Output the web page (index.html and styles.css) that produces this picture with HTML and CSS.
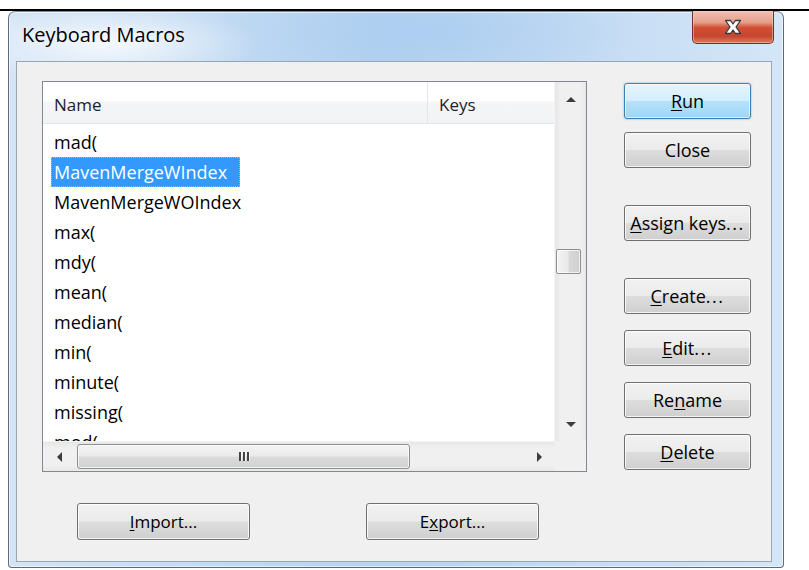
FILE: index.html
```html
<!DOCTYPE html>
<html>
<head>
<meta charset="utf-8">
<title>Keyboard Macros</title>
<link rel="stylesheet" href="styles.css">
</head>
<body>
<div class="rule"></div>
<div class="window">
  <div class="titlebar">
    <span class="title">Keyboard Macros</span>
    <div class="close-x">
      <svg width="20" height="16" viewBox="0 0 20 16">
        <path d="M2.5 1.5 L7.6 1.5 L10 5 L12.4 1.5 L17.5 1.5 L13 8 L17.5 14.5 L12.4 14.5 L10 11 L7.6 14.5 L2.5 14.5 L7 8 Z" fill="#fff" stroke="#3a3a3a" stroke-width="1.3" stroke-linejoin="round"/>
      </svg>
    </div>
  </div>
  <div class="client">
    <div class="main">
      <div class="listbox">
        <div class="list-area">
          <div class="list-view">
            <div class="header">
              <div class="col col-name">Name</div>
              <div class="col col-keys">Keys</div>
            </div>
            <div class="rows">
              <div class="row"><span class="cell">mad(</span></div>
              <div class="row"><span class="cell selected">MavenMergeWIndex</span></div>
              <div class="row"><span class="cell">MavenMergeWOIndex</span></div>
              <div class="row"><span class="cell">max(</span></div>
              <div class="row"><span class="cell">mdy(</span></div>
              <div class="row"><span class="cell">mean(</span></div>
              <div class="row"><span class="cell">median(</span></div>
              <div class="row"><span class="cell">min(</span></div>
              <div class="row"><span class="cell">minute(</span></div>
              <div class="row"><span class="cell">missing(</span></div>
              <div class="row"><span class="cell">mod(</span></div>
            </div>
          </div>
          <div class="vscroll">
            <div class="arrow-box"><span class="tri tri-up"></span></div>
            <div class="vtrack"><div class="vthumb"></div></div>
            <div class="arrow-box"><span class="tri tri-down"></span></div>
          </div>
        </div>
        <div class="hscroll-row">
          <div class="hscroll">
            <div class="harrow-box"><span class="tri tri-left"></span></div>
            <div class="htrack">
              <div class="hthumb"><span class="grip"></span><span class="grip"></span><span class="grip"></span></div>
            </div>
            <div class="harrow-box"><span class="tri tri-right"></span></div>
          </div>
          <div class="corner"></div>
        </div>
      </div>
      <div class="side">
        <div class="group group-top">
          <div class="btn btn-default"><span><u>R</u>un</span></div>
          <div class="btn"><span>Close</span></div>
        </div>
        <div class="group group-mid">
          <div class="btn"><span><u>A</u>ssign keys<span class="dots">...</span></span></div>
        </div>
        <div class="group group-low">
          <div class="btn"><span><u>C</u>reate<span class="dots">...</span></span></div>
          <div class="btn"><span><u>E</u>dit<span class="dots">...</span></span></div>
          <div class="btn"><span>Re<u>n</u>ame</span></div>
          <div class="btn"><span><u>D</u>elete</span></div>
        </div>
      </div>
    </div>
    <div class="bottom">
      <div class="btn btn-wide"><span><u>I</u>mport...</span></div>
      <div class="btn btn-wide"><span>E<u>x</u>port...</span></div>
    </div>
  </div>
</div>
</body>
</html>
```

FILE: styles.css
```css
html, body {
  margin: 0;
  padding: 0;
  background: #ffffff;
}

body {
  width: 809px;
  height: 570px;
  overflow: hidden;
  font-family: "Open Sans", "Noto Sans", "Liberation Sans", sans-serif;
  color: #000;
}

.rule {
  margin-top: 9px;
  height: 2px;
  background: #000;
}

/* Aero-style dialog frame */
.window {
  margin-left: 8px;
  width: 776px;
  height: 557px;
  box-sizing: border-box;
  border: 1px solid #5c6b7c;
  border-top-color: #7d8a98;
  border-radius: 7px 7px 4px 4px;
  padding: 0 11px 5px 7px;
  display: flex;
  flex-direction: column;
  background:
    radial-gradient(ellipse 150px 42px at 100px 32px, rgba(255,255,255,0.8), rgba(255,255,255,0) 100%),
    radial-gradient(ellipse 220px 60px at 420px 20px, rgba(160,200,240,0.5), rgba(160,200,240,0) 100%),
    linear-gradient(90deg, #d3e4f6 0%, #c3dbf3 25%, #b6d3f0 48%, #c1d9f2 68%, #d4e6f8 100%);
  box-shadow: inset 0 0 0 1px rgba(255,255,255,0.55);
}

.titlebar {
  height: 49px;
  display: flex;
  align-items: flex-start;
  justify-content: space-between;
}

.title {
  margin-top: 10px;
  margin-left: 6px;
  font-size: 20px;
  line-height: 26px;
  color: #000;
  text-shadow: 0 0 6px rgba(255,255,255,0.9);
}

.close-x {
  margin-top: -1px;
  margin-right: -2px;
  width: 82px;
  height: 33px;
  box-sizing: border-box;
  border: 1px solid #6e3226;
  border-top: none;
  border-radius: 0 0 5px 5px;
  background: linear-gradient(180deg, #efc0b2 0%, #e6a08c 35%, #d24f35 52%, #c5462e 78%, #dc7a5e 100%);
  box-shadow: inset 0 0 0 1px rgba(255,215,205,0.45);
  display: flex;
  align-items: center;
  justify-content: center;
}

.close-x svg {
  display: block;
}

/* client area */
.client {
  flex: 1;
  background: #f0f0f0;
  border: 1px solid #98a6b4;
  padding: 19px 0 0 25px;
  display: flex;
  flex-direction: column;
}

.main {
  display: flex;
  align-items: flex-start;
}

.listbox {
  width: 545px;
  height: 391px;
  box-sizing: border-box;
  border: 1px solid #828790;
  background: #fff;
  display: flex;
  flex-direction: column;
}

.list-area {
  height: 359px;
  display: flex;
}

.list-view {
  flex: 1;
  overflow: hidden;
  background: #fff;
}

.header {
  height: 42px;
  box-sizing: border-box;
  display: flex;
  border-bottom: 1px solid #e3e5e8;
  background: linear-gradient(180deg, #ffffff 0%, #ffffff 45%, #f4f5f7 50%, #f2f3f5 100%);
}

.col {
  font-size: 17px;
  line-height: 46px;
  color: #1e1e28;
  box-sizing: border-box;
}

.col-name {
  width: 385px;
  padding-left: 11px;
  border-right: 1px solid #e3e5e8;
}

.col-keys {
  padding-left: 11px;
}

.rows {
  padding-top: 3px;
}

.row {
  height: 30px;
  display: flex;
  align-items: center;
  padding-left: 8px;
}

.cell {
  font-size: 18px;
  line-height: 28px;
  padding: 0 12px 0 2px;
  color: #000;
  border: 1px dotted transparent;
}

.cell.selected {
  background: #3399ff;
  color: #fff;
  border: 1px dotted #f2a64f;
}

/* vertical scrollbar */
.vscroll {
  width: 31px;
  display: flex;
  flex-direction: column;
  background: linear-gradient(90deg, #e6e6e6 0%, #f0f0f0 20%, #f0f0f0 80%, #e8e8e8 100%);
  border-left: 1px solid #f4f4f4;
}

.arrow-box {
  height: 34px;
  display: flex;
  align-items: center;
  justify-content: center;
}

.vtrack {
  flex: 1;
  padding-left: 1px;
}

.vthumb {
  margin-top: 133px;
  width: 25px;
  height: 25px;
  box-sizing: border-box;
  border: 1px solid #8e8f8f;
  border-radius: 2px;
  background: linear-gradient(90deg, #f3f3f3 0%, #ebebeb 45%, #d8d8d8 55%, #d0d0d0 100%);
  box-shadow: inset 0 0 0 1px rgba(255,255,255,0.7);
}

.tri {
  width: 0;
  height: 0;
  display: block;
}

.tri-up {
  border-left: 5px solid transparent;
  border-right: 5px solid transparent;
  border-bottom: 5px solid #3d3d3d;
}

.tri-down {
  border-left: 5px solid transparent;
  border-right: 5px solid transparent;
  border-top: 5px solid #3d3d3d;
}

.tri-left {
  border-top: 5px solid transparent;
  border-bottom: 5px solid transparent;
  border-right: 5px solid #3d3d3d;
}

.tri-right {
  border-top: 5px solid transparent;
  border-bottom: 5px solid transparent;
  border-left: 5px solid #3d3d3d;
}

/* horizontal scrollbar */
.hscroll-row {
  flex: 1;
  display: flex;
}

.hscroll {
  flex: 1;
  display: flex;
  align-items: center;
  background: linear-gradient(180deg, #e6e6e6 0%, #f0f0f0 20%, #f0f0f0 80%, #e8e8e8 100%);
  border-top: 1px solid #f4f4f4;
}

.harrow-box {
  width: 32px;
  height: 100%;
  display: flex;
  align-items: center;
  justify-content: center;
}

.htrack {
  flex: 1;
  height: 100%;
  display: flex;
  align-items: center;
  padding-left: 2px;
}

.hthumb {
  width: 333px;
  height: 25px;
  box-sizing: border-box;
  border: 1px solid #8e8f8f;
  border-radius: 3px;
  background: linear-gradient(180deg, #f3f3f3 0%, #ebebeb 45%, #d9d9d9 55%, #d2d2d2 100%);
  box-shadow: inset 0 0 0 1px rgba(255,255,255,0.7);
  display: flex;
  align-items: center;
  justify-content: center;
  gap: 2px;
}

.grip {
  width: 2px;
  height: 9px;
  background: #444;
  box-shadow: 1px 0 0 #f8f8f8;
}

.corner {
  width: 31px;
  background: #f0f0f0;
}

/* push buttons */
.side {
  margin-left: 37px;
  display: flex;
  flex-direction: column;
}

.group {
  display: flex;
  flex-direction: column;
}

.group-top {
  margin-top: 2px;
  gap: 13px;
}

.group-mid {
  margin-top: 37px;
}

.group-low {
  margin-top: 37px;
  gap: 16px;
}

.btn {
  width: 127px;
  height: 36px;
  box-sizing: border-box;
  border: 1px solid #707070;
  border-radius: 3px;
  background: linear-gradient(180deg, #f2f2f2 0%, #ebebeb 49%, #dddddd 51%, #cfcfcf 100%);
  box-shadow: inset 0 0 0 1px rgba(255,255,255,0.75);
  display: flex;
  align-items: center;
  justify-content: center;
  font-size: 18px;
  color: #000;
}

.btn span {
  line-height: 20px;
}

.btn .dots {
  letter-spacing: 1.5px;
}

.btn u {
  text-decoration-thickness: 1px;
  text-underline-offset: 2px;
}

.btn-default {
  border-color: #3c7fb1;
  background: linear-gradient(180deg, #e6f5fe 0%, #d3eefc 49%, #b5e2fc 51%, #9fd6f5 100%);
  box-shadow: inset 0 0 0 1px rgba(255,255,255,0.6), 0 0 2px rgba(60,140,210,0.7);
}

.bottom {
  margin-top: 31px;
  margin-left: 35px;
  display: flex;
  gap: 116px;
}

.btn-wide {
  width: 173px;
  height: 37px;
  font-size: 17px;
}
```
